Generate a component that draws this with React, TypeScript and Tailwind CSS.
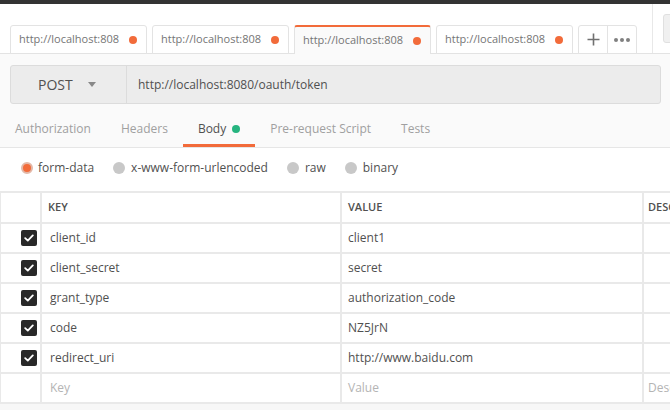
import type { ReactNode } from 'react'

const tabs = [
  { label: 'http://localhost:808', active: false },
  { label: 'http://localhost:808', active: false },
  { label: 'http://localhost:808', active: true },
  { label: 'http://localhost:808', active: false },
]

const requestTabs = ['Authorization', 'Headers', 'Body', 'Pre-request Script', 'Tests']

const params = [
  { key: 'client_id', value: 'client1' },
  { key: 'client_secret', value: 'secret' },
  { key: 'grant_type', value: 'authorization_code' },
  { key: 'code', value: 'NZ5JrN' },
  { key: 'redirect_uri', value: 'http://www.baidu.com' },
]

function Checkbox() {
  return (
    <div className="w-[16px] h-[16px] rounded-[2px] bg-[#282828] flex items-center justify-center">
      <svg width="10" height="8" viewBox="0 0 10 8" fill="none">
        <path d="M1.2 4.2 L3.8 6.6 L8.8 1.4" stroke="#fff" strokeWidth="1.8" strokeLinecap="round" strokeLinejoin="round" />
      </svg>
    </div>
  )
}

function Cell({ children, className = '' }: { children?: ReactNode; className?: string }) {
  return <div className={`bg-white flex items-center whitespace-nowrap overflow-hidden ${className}`}>{children}</div>
}

export default function App() {
  return (
    <div className="w-[670px] h-[410px] overflow-hidden bg-[#f7f7f7] font-['Open_Sans',sans-serif] text-[#505050]">
      {/* Window top */}
      <div className="h-[4px] bg-[#333333]" />

      {/* Open request tabs */}
      <div className="flex h-[50px] border-b border-[#e3e3e3] bg-white">
        <div className="flex items-end gap-[5px] pl-[10px]">
          {tabs.map((tab, i) => (
            <div
              key={i}
              className={`w-[137px] h-[29px] -mb-px flex items-center justify-between pl-[8px] pr-[9px] rounded-t-[3px] text-[11px] text-[#757575] border-x border-[#e3e3e3] ${
                tab.active ? 'bg-[#fafafa] border-t-2 border-t-[#f26b3a]' : 'bg-white border-t border-b'
              }`}
            >
              <span>{tab.label}</span>
              <span className="w-[8px] h-[8px] rounded-full bg-[#f26b3a]" />
            </div>
          ))}
          <div className="h-[29px] -mb-px flex rounded-t-[3px] border border-[#e3e3e3] bg-white">
            <div className="w-[29px] flex items-center justify-center border-r border-[#e3e3e3]">
              <svg width="13" height="13" viewBox="0 0 13 13">
                <path d="M6.5 0.5 V12.5 M0.5 6.5 H12.5" stroke="#707070" strokeWidth="1.6" />
              </svg>
            </div>
            <div className="w-[28px] flex items-center justify-center gap-[2px]">
              <span className="w-[4px] h-[4px] rounded-full bg-[#808080]" />
              <span className="w-[4px] h-[4px] rounded-full bg-[#808080]" />
              <span className="w-[4px] h-[4px] rounded-full bg-[#808080]" />
            </div>
          </div>
        </div>
        <div className="ml-[15px] border-l border-[#e8e8e8] pl-[10px] pt-[10px]">
          <div className="w-[40px] h-[29px] rounded-[3px] border border-[#e0e0e0] bg-[#f0f0f0]" />
        </div>
      </div>

      {/* URL bar + request section tabs */}
      <div className="bg-[#fafafa] border-b border-[#e6e6e6]">
        <div className="flex h-[50px] items-end pl-[10px]">
          <div className="flex h-[39px] w-[651px] rounded-[3px] border border-[#dcdcdc] bg-[#ececec]">
            <div className="w-[116px] flex items-center border-r border-[#dcdcdc] pl-[27px] text-[14px] text-[#505050]">
              <span>POST</span>
              <svg className="ml-[15px]" width="8" height="5" viewBox="0 0 8 5">
                <path d="M0 0 H8 L4 5 Z" fill="#888" />
              </svg>
            </div>
            <div className="flex items-center pl-[11px] text-[12px] text-[#505050]">http://localhost:8080/oauth/token</div>
          </div>
        </div>
        <div className="flex h-[43px] text-[12px]">
          {requestTabs.map((t) => (
            <div
              key={t}
              className={`flex items-center px-[15px] pt-[10px] border-b-[3px] ${
                t === 'Body' ? 'border-[#f26b3a] text-[#505050]' : 'border-transparent text-[#a0a0a0]'
              }`}
            >
              {t}
              {t === 'Body' && <span className="ml-[6px] w-[8px] h-[8px] rounded-full bg-[#26b47f]" />}
            </div>
          ))}
        </div>
      </div>

      {/* Body type radios */}
      <div className="flex h-[43px] items-center gap-[19px] bg-white pl-[21px] pb-[3px] text-[12px] text-[#505050]">
        <div className="flex items-center gap-[5px]">
          <span className="w-[12px] h-[12px] rounded-full bg-[#f26b3a] border-2 border-[#e3b8a8]" />
          form-data
        </div>
        <div className="flex items-center gap-[6px]">
          <span className="w-[12px] h-[12px] rounded-full bg-[#c8c8c8]" />
          x-www-form-urlencoded
        </div>
        <div className="flex items-center gap-[6px]">
          <span className="w-[12px] h-[12px] rounded-full bg-[#c8c8c8]" />
          raw
        </div>
        <div className="flex items-center gap-[6px]">
          <span className="w-[12px] h-[12px] rounded-full bg-[#c8c8c8]" />
          binary
        </div>
      </div>

      {/* Params table */}
      <div className="w-[900px] bg-[#e9e9e9] grid grid-cols-[39px_298px_300px_220px] grid-rows-[29px] auto-rows-[28px] gap-[2px] pl-[1px] pt-[2px] pb-[2px]">
        <Cell />
        <Cell className="pl-[6px] text-[11px] font-semibold text-[#505050]">KEY</Cell>
        <Cell className="pl-[6px] text-[11px] font-semibold text-[#505050]">VALUE</Cell>
        <Cell className="pl-[4px] text-[11px] font-semibold text-[#505050]">DESCRIPTION</Cell>
        {params.map((p) => (
          <>
            <Cell key={p.key + '-c'} className="justify-end pr-[3px]">
              <Checkbox />
            </Cell>
            <Cell key={p.key + '-k'} className="pl-[8px] text-[12px]">{p.key}</Cell>
            <Cell key={p.key + '-v'} className="pl-[6px] text-[12px]">{p.value}</Cell>
            <Cell key={p.key + '-d'} />
          </>
        ))}
        <Cell />
        <Cell className="pl-[8px] text-[12px] text-[#b4b4b4]">Key</Cell>
        <Cell className="pl-[6px] text-[12px] text-[#b4b4b4]">Value</Cell>
        <Cell className="pl-[4px] text-[12px] text-[#b4b4b4]">Description</Cell>
      </div>
    </div>
  )
}
